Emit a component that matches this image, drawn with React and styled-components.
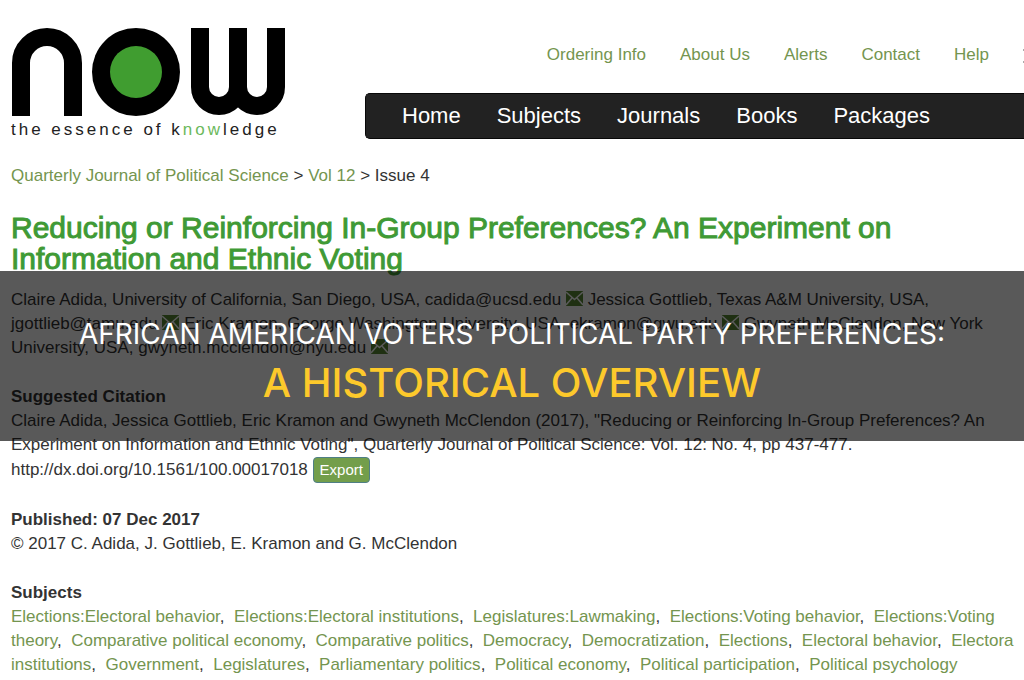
import React from 'react';
import styled, { createGlobalStyle } from 'styled-components';

const GlobalStyle = createGlobalStyle`
  * {
    box-sizing: border-box;
  }
  body {
    margin: 0;
    overflow: hidden;
    background: #fff;
    color: #333;
    font-family: 'Liberation Sans', Arial, sans-serif;
    font-size: 17px;
    line-height: 24px;
  }
`;

const Page = styled.div`
  position: relative;
  overflow: hidden;
`;

const Header = styled.header`
  display: flex;
  justify-content: space-between;
  padding-left: 11px;
`;

const LogoLink = styled.a`
  flex: none;
  padding-top: 27px;
  color: #222;
  text-decoration: none;
`;

const LogoMark = styled.svg`
  display: block;
  width: 275px;
  height: 90px;
`;

const Tagline = styled.div`
  font-size: 17px;
  line-height: 26px;
  letter-spacing: 3px;
  white-space: nowrap;

  span {
    color: #6cb95c;
  }
`;

const HeaderRight = styled.div`
  flex: none;
  width: calc(100% - 354px);
`;

const TopLinks = styled.nav`
  display: flex;
  justify-content: flex-end;
  gap: 34px;
  padding: 43px 0 26px;
  white-space: nowrap;
`;

const MenuMark = styled.svg`
  width: 1px;
  height: 24px;
`;

const Link = styled.a`
  color: #74954f;
  text-decoration: none;
`;

const NavBar = styled.nav`
  display: flex;
  gap: 36px;
  height: 46px;
  padding-left: 36px;
  background: #222;
  border: 1px solid #080808;
  border-right: 0;
  border-radius: 5px 0 0 5px;
`;

const NavLink = styled.a`
  color: #fff;
  font-size: 22px;
  line-height: 44px;
  text-decoration: none;
`;

const Main = styled.main`
  padding: 21px 0 0 11px;
  white-space: nowrap;
`;

const Title = styled.h1`
  margin: 24px 0 14px;
  color: #3f9a35;
  font-size: 30px;
  font-weight: 400;
  line-height: 31px;
  -webkit-text-stroke: 1px #3f9a35;
`;

const Block = styled.section`
  margin-bottom: 25px;
`;

const Heading = styled.h2`
  margin: 0;
  font-size: 17px;
  line-height: 24px;
`;

const Mail = styled.svg`
  width: 17px;
  height: 15px;
  vertical-align: -1px;
`;

const ExportButton = styled.button`
  height: 26px;
  padding: 0 6px;
  background: #739e4b;
  border: 1px solid #4f7f86;
  border-radius: 4px;
  color: #fff;
  font-family: inherit;
  font-size: 15px;
  line-height: 22px;
`;

const Banner = styled.div`
  position: absolute;
  top: 271px;
  left: 0;
  right: 0;
  height: 170px;
  padding-top: 44px;
  background: rgba(0, 0, 0, 0.65);
  color: #fff;
  font-family: Inter, 'Liberation Sans', sans-serif;
  font-size: 28px;
  line-height: 38px;
  text-align: center;
  white-space: nowrap;
`;

const BannerAccent = styled.div`
  color: #fdc92b;
  font-size: 40px;
  font-weight: 500;
  line-height: 60px;
`;

const topLinks = ['Ordering Info', 'About Us', 'Alerts', 'Contact', 'Help'];
const navLinks = ['Home', 'Subjects', 'Journals', 'Books', 'Packages'];

const subjects = [
  ['Elections:Electoral behavior', 'Elections:Electoral institutions', 'Legislatures:Lawmaking', 'Elections:Voting behavior', 'Elections:Voting'],
  ['theory', 'Comparative political economy', 'Comparative politics', 'Democracy', 'Democratization', 'Elections', 'Electoral behavior', 'Electora'],
  ['institutions', 'Government', 'Legislatures', 'Parliamentary politics', 'Political economy', 'Political participation', 'Political psychology'],
];

const MailIcon = () => (
  <Mail viewBox="0 0 17 15" role="img" aria-label="Email">
    <rect width="17" height="15" fill="#5a8a35" />
    <path d="M0 1L8.500 8.500L17 1M0 14L6 7M17 14L11 7" fill="none" stroke="#fff" strokeWidth="1.500" />
  </Mail>
);

const Logo = () => (
  <LogoLink href="#" aria-label="now, the essence of knowledge">
    <LogoMark viewBox="0 0 275 90">
      <path d="M10 89V36A26 26 0 0 1 62 36V89" fill="none" stroke="#000" strokeWidth="18" />
      <circle cx="125" cy="45" r="44" />
      <circle cx="125" cy="45" r="26" fill="#409d30" />
      <path
        d="M189 1V60A19 19 0 0 0 227 60V1M227 60A19 19 0 0 0 265 60V1"
        fill="none"
        stroke="#000"
        strokeWidth="18"
      />
    </LogoMark>
    <Tagline>the essence of k<span>now</span>ledge</Tagline>
  </LogoLink>
);

const App = () => {
  return (
    <Page>
      <GlobalStyle />
      <Header>
        <Logo />
        <HeaderRight>
          <TopLinks>
            {topLinks.map((item) => (
              <Link href="#" key={item}>{item}</Link>
            ))}
            <MenuMark viewBox="0 0 1 24" aria-hidden="true">
              <path d="M0 6h1v2H0zM0 18h1v2H0z" fill="#aaa" />
            </MenuMark>
          </TopLinks>
          <NavBar>
            {navLinks.map((item) => (
              <NavLink href="#" key={item}>{item}</NavLink>
            ))}
          </NavBar>
        </HeaderRight>
      </Header>
      <Main>
        <div>
          <Link href="#">Quarterly Journal of Political Science</Link> &gt; <Link href="#">Vol 12</Link> &gt; Issue 4
        </div>
        <Title>
          Reducing or Reinforcing In-Group Preferences? An Experiment on<br />
          Information and Ethnic Voting
        </Title>
        <Block>
          Claire Adida, University of California, San Diego, USA, cadida@ucsd.edu <MailIcon /> Jessica Gottlieb, Texas A&amp;M University, USA,<br />
          jgottlieb@tamu.edu <MailIcon /> Eric Kramon, George Washington University, USA, ekramon@gwu.edu <MailIcon /> Gwyneth McClendon, New York<br />
          University, USA, gwyneth.mcclendon@nyu.edu <MailIcon />
        </Block>
        <Block>
          <Heading>Suggested Citation</Heading>
          Claire Adida, Jessica Gottlieb, Eric Kramon and Gwyneth McClendon (2017), "Reducing or Reinforcing In-Group Preferences? An<br />
          Experiment on Information and Ethnic Voting", Quarterly Journal of Political Science: Vol. 12: No. 4, pp 437-477.<br />
          http://dx.doi.org/10.1561/100.00017018 <ExportButton type="button">Export</ExportButton>
        </Block>
        <Block>
          <Heading>Published: 07 Dec 2017</Heading>
          © 2017 C. Adida, J. Gottlieb, E. Kramon and G. McClendon
        </Block>
        <Block>
          <Heading>Subjects</Heading>
          {subjects.map((line, row) => (
            <div key={row}>
              {line.map((subject, i) => (
                <React.Fragment key={subject}>
                  <Link href="#">{subject}</Link>
                  {i < line.length - 1 && <>,&nbsp; </>}
                </React.Fragment>
              ))}
            </div>
          ))}
        </Block>
      </Main>
      <Banner>
        <div>AFRICAN AMERICAN VOTERS' POLITICAL PARTY PREFERENCES:</div>
        <BannerAccent>A HISTORICAL OVERVIEW</BannerAccent>
      </Banner>
    </Page>
  );
};

export default App;
